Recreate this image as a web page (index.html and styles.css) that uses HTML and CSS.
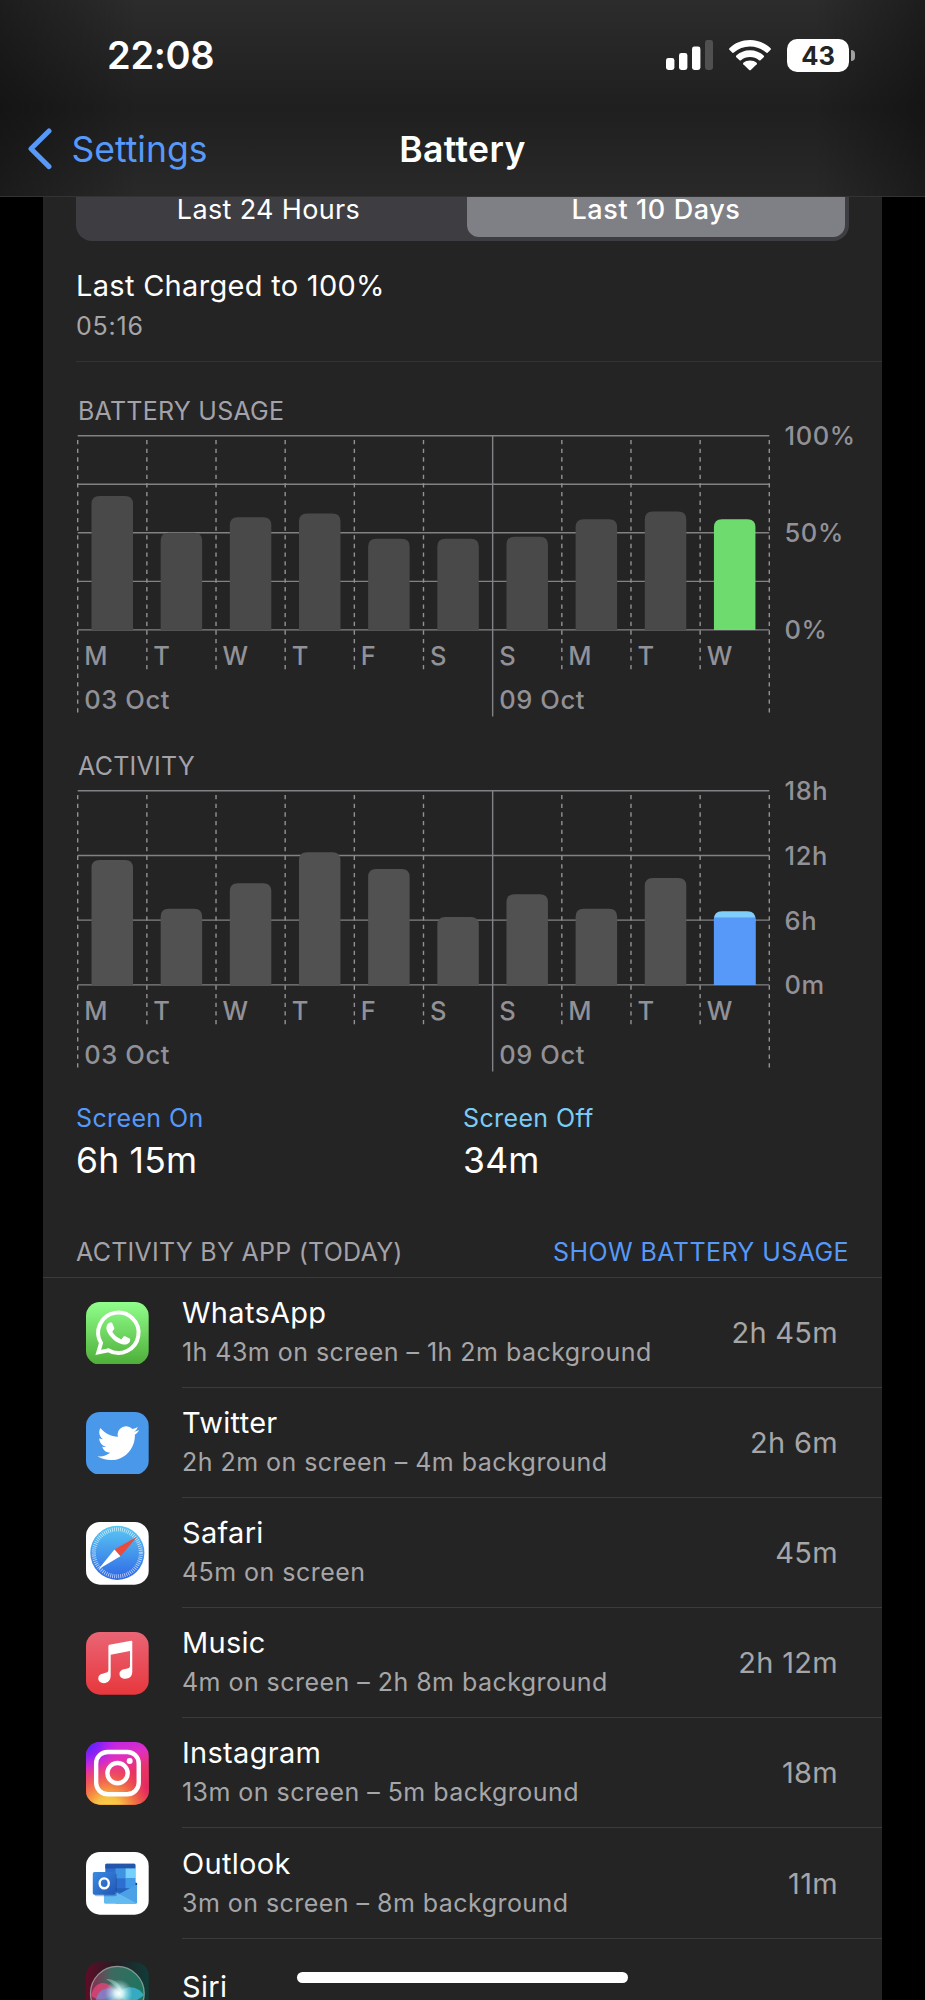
FILE: index.html
```html
<!DOCTYPE html>
<html lang="en">
<head>
  <meta charset="UTF-8">
  <meta name="viewport" content="width=device-width, initial-scale=1.0">
  <title>Battery</title>
  <link rel="stylesheet" href="styles.css">
</head>
<body>
  <header>
    <div class="status-bar">
      <span class="clock">22:08</span>
      <div class="status-icons">
        <svg class="signal" width="47" height="30" viewBox="0 0 47 30">
          <rect x="0" y="18" width="8.4" height="12" rx="2.4"/>
          <rect x="13" y="13" width="8.4" height="17" rx="2.4"/>
          <rect x="26" y="6.5" width="8.4" height="23.5" rx="2.4"/>
          <rect class="dim" x="39" y="0" width="8" height="30" rx="2.4"/>
        </svg>
        <svg class="wifi" width="42" height="31" viewBox="0 0 42 31">
          <path d="M21 0C29 0 36.4 3.1 41.6 8.2Q42.3 9 41.6 9.8L38.6 12.7Q37.9 13.3 37.1 12.6C32.7 8.6 27.1 6.4 21 6.4S9.3 8.6 4.9 12.6Q4.1 13.3 3.4 12.7L.4 9.8Q-.3 9 .4 8.2C5.6 3.1 13 0 21 0Z"/>
          <path d="M21 10.3C26.3 10.3 31.1 12.3 34.7 15.6Q35.4 16.4 34.7 17.2L31.5 20.2Q30.8 20.8 30 20.2C27.5 18 24.4 16.9 21 16.9S14.5 18 12 20.2Q11.2 20.8 10.5 20.2L7.3 17.2Q6.6 16.4 7.3 15.6C10.9 12.3 15.7 10.3 21 10.3Z"/>
          <path d="M21 20.5C23.5 20.5 25.8 21.3 27.6 22.7Q28.4 23.5 27.7 24.3L21.8 30Q21 30.7 20.2 30L14.3 24.3Q13.6 23.5 14.4 22.7C16.2 21.3 18.5 20.5 21 20.5Z"/>
        </svg>
        <div class="battery"><span>43</span></div>
      </div>
    </div>
    <nav>
      <a class="back" href="#">
        <svg width="24" height="42" viewBox="0 0 24 42"><path d="M21 3L3 20.8L21 38.6"/></svg>
        <span>Settings</span>
      </a>
      <h1>Battery</h1>
    </nav>
  </header>

  <main>
    <div class="tabs">
      <div class="tab">Last 24 Hours</div>
      <div class="tab active">Last 10 Days</div>
    </div>

    <div class="charged">
      <p class="name">Last Charged to 100%</p>
      <p class="sub">05:16</p>
    </div>

    <section class="chart-section">
      <h2>BATTERY USAGE</h2>
      <svg class="chart" id="usage-chart" width="806" height="300"></svg>
    </section>

    <section class="chart-section activity">
      <h2>ACTIVITY</h2>
      <svg class="chart" id="activity-chart" width="806" height="300"></svg>
    </section>

    <div class="totals">
      <div>
        <p class="label screen-on">Screen On</p>
        <p class="total">6h 15m</p>
      </div>
      <div>
        <p class="label screen-off">Screen Off</p>
        <p class="total">34m</p>
      </div>
    </div>

    <div class="list-header">
      <h2>ACTIVITY BY APP (TODAY)</h2>
      <a href="#">SHOW BATTERY USAGE</a>
    </div>

    <ul class="apps">
      <li>
        <svg class="icon" viewBox="0 0 63 63">
          <defs>
            <linearGradient id="wa" x2="0" y2="1"><stop offset="0" stop-color="#91ff8c"/><stop offset="1" stop-color="#4dae37"/></linearGradient>
          </defs>
          <rect width="63" height="63" rx="14" fill="url(#wa)"/>
          <path d="M12.3 50.7L15.1 41.3A20.3 20.3 0 1 1 22.4 48.5Z" fill="none" stroke="#fff" stroke-width="4"/>
          <path transform="translate(8.6 7.9) scale(1.98)" fill="#fff" d="M17.472 14.382c-.297-.149-1.758-.867-2.03-.967-.273-.099-.471-.148-.67.15-.197.297-.767.966-.94 1.164-.173.199-.347.223-.644.075-.297-.15-1.255-.463-2.39-1.475-.883-.788-1.48-1.761-1.653-2.059-.173-.297-.018-.458.13-.606.134-.133.298-.347.446-.52.149-.174.198-.298.298-.497.099-.198.05-.371-.025-.52-.075-.149-.669-1.612-.916-2.207-.242-.579-.487-.5-.669-.51-.173-.008-.371-.01-.57-.01-.198 0-.52.074-.792.372-.272.297-1.04 1.016-1.04 2.479 0 1.462 1.065 2.875 1.213 3.074.149.198 2.096 3.2 5.077 4.487.709.306 1.262.489 1.694.625.712.227 1.36.195 1.871.118.571-.085 1.758-.719 2.006-1.413.248-.694.248-1.289.173-1.413-.074-.124-.272-.198-.57-.347"/>
        </svg>
        <div class="row">
          <div><p class="name">WhatsApp</p><p class="sub">1h 43m on screen – 1h 2m background</p></div>
          <span class="value">2h 45m</span>
        </div>
      </li>
      <li>
        <svg class="icon" viewBox="0 0 63 63">
          <rect width="63" height="63" rx="14" fill="#4998e9"/>
          <path transform="translate(11.6 10.5) scale(1.74)" fill="#fff" d="M23.953 4.57a10 10 0 01-2.825.775 4.958 4.958 0 002.163-2.723c-.951.555-2.005.959-3.127 1.184a4.92 4.92 0 00-8.384 4.482C7.69 8.095 4.067 6.13 1.64 3.162a4.822 4.822 0 00-.666 2.475c0 1.71.87 3.213 2.188 4.096a4.904 4.904 0 01-2.228-.616v.06a4.923 4.923 0 003.946 4.827 4.996 4.996 0 01-2.212.085 4.936 4.936 0 004.604 3.417 9.867 9.867 0 01-6.102 2.105c-.39 0-.779-.023-1.17-.067a13.995 13.995 0 007.557 2.209c9.053 0 13.998-7.496 13.998-13.985 0-.21 0-.42-.015-.63A9.935 9.935 0 0024 4.59z"/>
        </svg>
        <div class="row">
          <div><p class="name">Twitter</p><p class="sub">2h 2m on screen – 4m background</p></div>
          <span class="value">2h 6m</span>
        </div>
      </li>
      <li>
        <svg class="icon" viewBox="0 0 63 63">
          <defs>
            <linearGradient id="sf" x2="0" y2="1"><stop offset="0" stop-color="#5ac8f2"/><stop offset="1" stop-color="#2f67e6"/></linearGradient>
          </defs>
          <rect width="63" height="63" rx="14" fill="#fff"/>
          <circle cx="31.5" cy="31" r="27.2" fill="url(#sf)"/>
          <circle cx="31.5" cy="31" r="23.6" fill="none" stroke="#fff" stroke-opacity=".7" stroke-width="4" stroke-dasharray=".8 1.26"/>
          <path d="M51.5 14.5L28.6 27.6L34.6 34.4Z" fill="#ea4b3c"/>
          <path d="M12.5 47.5L28.6 27.6L34.6 34.4Z" fill="#fff"/>
        </svg>
        <div class="row">
          <div><p class="name">Safari</p><p class="sub">45m on screen</p></div>
          <span class="value">45m</span>
        </div>
      </li>
      <li>
        <svg class="icon" viewBox="0 0 63 63">
          <defs>
            <linearGradient id="mu" x2="0" y2="1"><stop offset="0" stop-color="#ea6575"/><stop offset="1" stop-color="#e7373d"/></linearGradient>
          </defs>
          <rect width="63" height="63" rx="14" fill="url(#mu)"/>
          <path d="M22.5 14Q22.6 13 23.6 12.7L45.3 8.7Q46.5 8.6 46.5 9.8V40C46.5 44.5 43.5 47 39.6 47C36 47 33.7 44.9 33.7 42.2C33.7 39.2 36 37.8 39.3 37.3C43 36.7 44.2 36.4 44.2 33.5V19.2L24.8 22.8V43.8C24.8 48.6 22 51.4 18 51.4C14.5 51.4 12.3 49.2 12.3 46.5C12.3 43.6 14.5 42.1 17.5 41.6C21.2 41 22.5 40.6 22.5 37.8Z" fill="#fff"/>
        </svg>
        <div class="row">
          <div><p class="name">Music</p><p class="sub">4m on screen – 2h 8m background</p></div>
          <span class="value">2h 12m</span>
        </div>
      </li>
      <li>
        <svg class="icon" viewBox="0 0 63 63">
          <defs>
            <linearGradient id="ig" x1="0" y1="0" x2=".25" y2="1"><stop offset="0" stop-color="#b422f5"/><stop offset=".35" stop-color="#e02fc0"/><stop offset=".65" stop-color="#ee4060"/><stop offset="1" stop-color="#f26a2e"/></linearGradient>
            <radialGradient id="ig-blue" cx="0" cy="0" r=".5"><stop offset="0" stop-color="#4a22ff"/><stop offset=".45" stop-color="#7a20fb" stop-opacity=".8"/><stop offset="1" stop-color="#b422f5" stop-opacity="0"/></radialGradient>
            <radialGradient id="ig-yellow" cx=".35" cy="1.1" r=".75"><stop offset="0" stop-color="#fadb4a"/><stop offset=".3" stop-color="#f7c044"/><stop offset="1" stop-color="#f0553c" stop-opacity="0"/></radialGradient>
            <radialGradient id="ig-red" cx="1" cy=".75" r=".6"><stop offset="0" stop-color="#e3206a"/><stop offset="1" stop-color="#e3206a" stop-opacity="0"/></radialGradient>
          </defs>
          <rect width="63" height="63" rx="14" fill="url(#ig)"/>
          <rect width="63" height="63" rx="14" fill="url(#ig-blue)"/>
          <rect width="63" height="63" rx="14" fill="url(#ig-red)"/>
          <rect width="63" height="63" rx="14" fill="url(#ig-yellow)"/>
          <g fill="none" stroke="#fff" stroke-width="4.4">
            <rect x="10.2" y="10" width="42.8" height="42.5" rx="11.5"/>
            <circle cx="31.7" cy="31.3" r="10.2"/>
          </g>
          <circle cx="43.9" cy="19" r="3" fill="#fff"/>
        </svg>
        <div class="row">
          <div><p class="name">Instagram</p><p class="sub">13m on screen – 5m background</p></div>
          <span class="value">18m</span>
        </div>
      </li>
      <li>
        <svg class="icon" viewBox="0 0 63 63">
          <defs>
            <linearGradient id="ol" x2="1" y2="1"><stop offset="0" stop-color="#3a8be0"/><stop offset="1" stop-color="#2257b8"/></linearGradient>
          </defs>
          <rect width="63" height="63" rx="14" fill="#fff"/>
          <path d="M49.6 30L51.3 31.5V36H49.6Z" fill="#3b8fe0"/>
          <rect x="19.4" y="11.8" width="30.2" height="38" rx="1.3" fill="#2d6fd0"/>
          <path d="M19.4 16.5V13Q19.4 11.8 20.6 11.8H48.4Q49.6 11.8 49.6 13V16.5Z" fill="#2455a8"/>
          <path d="M29.7 16.5H39.7V26.5H29.7Z" fill="#3f93e3"/>
          <path d="M39.7 16.5H49.6V26.5H39.7Z" fill="#75d0fb"/>
          <path d="M39.7 26.5H49.6V37H39.7Z" fill="#419ae8"/>
          <path d="M27 36.5H45L35.5 42Z" fill="#2560bd"/>
          <path d="M51.3 32.5V50.5Q51.3 52 49.8 52H30V44Z" fill="#4ba0e6"/>
          <path d="M18 34L51 51.5Q50.5 52 49.8 52H19.5Q18 52 18 50.5Z" fill="#63baf0"/>
          <circle cx="50.5" cy="32.2" r="1" fill="#1c3c70"/>
          <rect x="8.5" y="21.5" width="22.5" height="23" rx="2" fill="#123a78" opacity=".35"/>
          <rect x="6.8" y="20.2" width="23" height="22.7" rx="1.7" fill="url(#ol)"/>
          <ellipse cx="18.3" cy="31.5" rx="4.6" ry="5" fill="none" stroke="#fff" stroke-width="2.4"/>
        </svg>
        <div class="row">
          <div><p class="name">Outlook</p><p class="sub">3m on screen – 8m background</p></div>
          <span class="value">11m</span>
        </div>
      </li>
      <li class="siri">
        <svg class="icon" viewBox="0 0 63 63">
          <defs>
            <linearGradient id="si" x2="1" y2="0"><stop offset="0" stop-color="#5e0d28"/><stop offset=".45" stop-color="#261c24"/><stop offset="1" stop-color="#103c38"/></linearGradient>
            <linearGradient id="si-orb" x2="1" y2="0"><stop offset="0" stop-color="#8c2c50"/><stop offset=".4" stop-color="#3d6a60"/><stop offset="1" stop-color="#1c7660"/></linearGradient>
            <radialGradient id="si-glow"><stop offset="0" stop-color="#fff"/><stop offset=".3" stop-color="#e8ffff" stop-opacity=".85"/><stop offset="1" stop-color="#a8e8f0" stop-opacity="0"/></radialGradient>
          </defs>
          <rect width="63" height="63" rx="14" fill="url(#si)"/>
          <circle cx="31.5" cy="31.5" r="27" fill="url(#si-orb)" stroke="#a5b5ad" stroke-opacity=".75" stroke-width="1.3"/>
          <path d="M5 34C8 20 20 15 31 31C22 38 12 40 5 34Z" fill="#e8467c" opacity=".75"/>
          <path d="M10 38C12 27 24 22 34 31C28 42 16 44 10 38Z" fill="#5b9cf0" opacity=".6"/>
          <path d="M32 32C40 22 52 24 58 33C50 42 38 42 32 32Z" fill="#3dc2ea" opacity=".7"/>
          <path d="M20 17C30 17 36 23 36 31Q31 24 20 17Z" fill="#b9f0dc" opacity=".4"/>
          <circle cx="33" cy="31.5" r="14" fill="url(#si-glow)"/>
        </svg>
        <div class="row">
          <p class="name">Siri</p>
        </div>
      </li>
    </ul>
  </main>

  <div class="home-indicator"></div>

  <script>
    const days = ['M', 'T', 'W', 'T', 'F', 'S', 'S', 'M', 'T', 'W'];

    const plotLeft = 1.7;
    const plotTop = 9.7;
    const plotHeight = 194.2;
    const colWidth = 69.16;
    const barWidth = 41.5;

    function line(cls, x1, y1, x2, y2) {
      return `<line class="${cls}" x1="${x1}" y1="${y1}" x2="${x2}" y2="${y2}"/>`;
    }

    // Bar with rounded top corners and a flat bottom
    function bar(cls, x, height) {
      const y = plotTop + plotHeight - height;
      const r = 8;
      return `<path class="${cls}" d="M${x} ${y + height}V${y + r}q0 ${-r} ${r} ${-r}h${barWidth - 2 * r}q${r} 0 ${r} ${r}V${y + height}z"/>`;
    }

    function drawChart(id, max, ticks, gridLines, values, cls, lower) {
      const right = plotLeft + colWidth * 10;
      const bottom = plotTop + plotHeight;
      let out = '';

      for (let i = 0; i <= gridLines; i++) {
        const y = plotTop + plotHeight * i / gridLines;
        out += line('grid', plotLeft, y, right, y);
      }

      for (let i = 0; i <= 10; i++) {
        const x = plotLeft + colWidth * i;
        if (i === 6) {
          out += line('grid', x, plotTop, x, 290.5);
        } else {
          out += line('grid dashed', x, plotTop, x, i % 10 === 0 ? 286.5 : 243.3);
        }
      }

      values.forEach((value, i) => {
        const x = plotLeft + colWidth * i + 13.8;
        const height = plotHeight * value / max;
        out += bar(i === 9 ? cls : 'bar', x, height);
        if (i === 9 && lower) {
          const h = plotHeight * lower / max;
          out += `<rect class="bar-on" x="${x}" y="${bottom - h}" width="${barWidth}" height="${h}"/>`;
        }
        out += `<text x="${plotLeft + colWidth * i + 6.5}" y="239.3">${days[i]}</text>`;
      });

      out += `<text x="${plotLeft + 6.5}" y="283.3">03 Oct</text>`;
      out += `<text x="${plotLeft + colWidth * 6 + 6.5}" y="283.3">09 Oct</text>`;

      ticks.forEach((tick, i) => {
        const y = plotTop + plotHeight * i / (ticks.length - 1) + 9.5;
        out += `<text x="708.5" y="${y}">${tick}</text>`;
      });

      document.getElementById(id).innerHTML = out;
    }

    drawChart('usage-chart', 100, ['100%', '50%', '0%'], 4,
      [69, 50, 58, 60, 47, 47, 48, 57, 61, 57], 'bar bar-green');
    drawChart('activity-chart', 18, ['18h', '12h', '6h', '0m'], 3,
      [11.57, 7.05, 9.42, 12.3, 10.75, 6.3, 8.4, 7.05, 9.9, 6.82], 'bar bar-off', 6.25);
  </script>
</body>
</html>
```
FILE: styles.css
```css
* {
  box-sizing: border-box;
  margin: 0;
  padding: 0;
}

body {
  width: 925px;
  height: 2000px;
  overflow: hidden;
  background: #000;
  color: #fff;
  font-family: Inter, "Liberation Sans", sans-serif;
  position: relative;
}

a {
  text-decoration: none;
}

ul {
  list-style: none;
}

/* Top bar */
header {
  height: 197px;
  background:
    linear-gradient(90deg, rgba(0, 0, 0, 0.35), transparent 15%, transparent 88%, rgba(0, 0, 0, 0.35)),
    linear-gradient(180deg, #2c2c2c, #1f1f1f 55%, #292929);
  border-bottom: 1px solid #333;
}

.status-bar {
  height: 110px;
  padding: 0 76px 0 107px;
  display: flex;
  align-items: center;
  justify-content: space-between;
}

.clock {
  font-size: 38px;
  font-weight: 600;
  letter-spacing: -0.3px;
}

.status-icons {
  display: flex;
  align-items: center;
  fill: #fff;
}

.signal .dim {
  fill: #505050;
}

.wifi {
  margin: 0 16px 0 16px;
}

.battery {
  position: relative;
  width: 62px;
  height: 33px;
  border-radius: 10px;
  background: #fff;
  color: #242424;
  font-size: 25.5px;
  font-weight: 700;
  line-height: 33px;
  text-align: center;
}

.battery::after {
  content: "";
  position: absolute;
  left: 63.5px;
  top: 11px;
  width: 4px;
  height: 11px;
  border-radius: 0 5px 5px 0;
  background: #a0a0a0;
}

nav {
  height: 78px;
  display: grid;
  grid-template-columns: 1fr auto 1fr;
  align-items: center;
}

nav h1 {
  font-size: 35.5px;
  font-weight: 600;
  letter-spacing: 0.4px;
}

.back {
  display: flex;
  align-items: center;
  gap: 19.5px;
  padding-left: 28px;
  color: #5799f9;
  font-size: 35.5px;
}

.back path {
  fill: none;
  stroke: #5799f9;
  stroke-width: 5;
  stroke-linecap: round;
  stroke-linejoin: round;
}

/* Card */
main {
  width: 839px;
  height: 1803px;
  margin-left: 43px;
  background: #242424;
}

.tabs {
  display: flex;
  width: 773px;
  height: 44px;
  margin-left: 33px;
  padding-right: 4px;
  border-radius: 0 0 16px 16px;
  background: #3e3d42;
  font-size: 27px;
  line-height: 26px;
  text-align: center;
}

.tab {
  flex: 1;
  height: 40px;
  padding-right: 6px;
  letter-spacing: 0.35px;
}

.tab.active {
  flex: none;
  width: 378px;
  padding-right: 0;
  border-radius: 0 0 12px 12px;
  background: #7f8085;
  font-weight: 500;
  letter-spacing: 0.6px;
}

.name {
  font-size: 29px;
  letter-spacing: 0.3px;
  line-height: 36px;
}

.sub {
  margin-top: 3px;
  color: #a6a6a8;
  font-size: 25px;
  letter-spacing: 0.46px;
  line-height: 36px;
}

.charged {
  height: 121px;
  margin-left: 33px;
  padding-top: 27px;
  border-bottom: 1px solid #343434;
}

.charged .sub {
  margin-top: 4px;
  letter-spacing: 0.8px;
}

h2,
.list-header a {
  color: #a3a2a9;
  font-size: 25px;
  font-weight: 400;
  letter-spacing: 0.25px;
  line-height: 30px;
}

/* Charts */
.chart-section {
  padding: 34px 0 0 33px;
}

.chart-section.activity {
  padding-top: 25px;
}

.chart-section h2 {
  padding-left: 2px;
}

.chart {
  display: block;
  overflow: visible;
}

.chart .grid {
  stroke: #828286;
  stroke-width: 1.4;
}

.chart .dashed {
  stroke: #929296;
  stroke-dasharray: 4.3 4.35;
  stroke-dashoffset: 4.3;
}

.chart .bar {
  fill: #494949;
}

#activity-chart .bar {
  fill: #515151;
}

.chart .bar-green {
  fill: #6ddb6d;
}

#activity-chart .bar-off {
  fill: #80cefa;
}

.chart .bar-on {
  fill: #5799f9;
}

.chart text {
  fill: #929197;
  font-size: 25.5px;
  font-weight: 500;
  letter-spacing: 0.6px;
}

/* Screen on and off totals */
.totals {
  display: grid;
  grid-template-columns: 387px 1fr;
  padding: 22px 0 0 33px;
}

.label {
  font-size: 25px;
  letter-spacing: 0.38px;
  line-height: 30px;
}

.screen-on {
  color: #5799f9;
}

.screen-off {
  color: #7bcbf5;
}

.total {
  margin-top: 6px;
  font-size: 35.5px;
  letter-spacing: 0.2px;
  line-height: 44px;
}

/* App list */
.list-header {
  display: flex;
  justify-content: space-between;
  margin-top: 54px;
  padding: 0 33px 10px;
  border-bottom: 1px solid #3b3b3b;
}

.list-header a {
  color: #5799f9;
  letter-spacing: 0.42px;
}

.apps li {
  display: flex;
  align-items: center;
  height: 110.1px;
  padding-left: 43.3px;
}

.icon {
  flex: none;
  width: 62.7px;
  height: 62.7px;
  margin-right: 33px;
}

.row {
  flex: 1;
  height: 100%;
  display: flex;
  align-items: center;
  justify-content: space-between;
  padding-right: 44px;
  border-bottom: 1px solid #3b3b3b;
}

.value {
  color: #a6a6a8;
  font-size: 29px;
  letter-spacing: 0.3px;
}

.siri .row {
  padding-bottom: 14px;
  border-bottom: none;
}

.home-indicator {
  position: absolute;
  left: 297px;
  top: 1972px;
  width: 331px;
  height: 11px;
  border-radius: 6px;
  background: #fff;
}
```
